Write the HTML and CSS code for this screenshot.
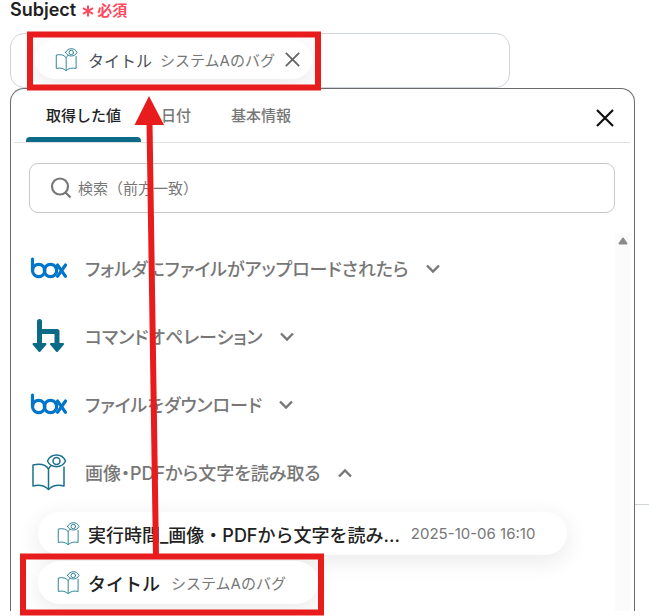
FILE: index.html
```
<!DOCTYPE html>
<html lang="ja">
<head>
<meta charset="utf-8">
<meta name="viewport" content="width=device-width, initial-scale=1">
<title>Subject</title>
<link rel="stylesheet" href="styles.css">
</head>
<body>
<svg class="defs" aria-hidden="true">
  <symbol id="book" viewBox="0 0 36 38">
    <g fill="none" stroke="currentColor" stroke-width="1.500" stroke-linejoin="round" stroke-linecap="round">
      <path d="M17.500 16 C15 12 9 10.500 2 12 V33 C8 31.500 14 33 17.500 36.500 C21 33 27 31.500 33 33 V14"/>
      <path d="M17.500 36 V16 C18 14.500 19 13.500 20.500 12.500"/>
      <path d="M16.500 8 C20 0 31 0 34.500 8 C31 15.500 20 15.500 16.500 8 Z"/>
      <circle cx="25.500" cy="8" r="3.500"/>
    </g>
  </symbol>
  <symbol id="box" viewBox="0 0 38 22">
    <g fill="none" stroke="#0075c9" stroke-width="3.200" stroke-linecap="round">
      <path d="M2.500 2 V13"/>
      <circle cx="8.700" cy="13.500" r="6.200"/>
      <circle cx="20.500" cy="13.500" r="6.200"/>
      <path d="M27.500 8 L35.500 19.300 M35.500 8 L27.500 19.300"/>
    </g>
  </symbol>
  <symbol id="chevron" viewBox="0 0 14 10">
    <path d="M1 1.500 L7 7.500 L13 1.500" fill="none" stroke="currentColor" stroke-width="2.400"/>
  </symbol>
  <symbol id="cross" viewBox="0 0 18 18">
    <path d="M1 1 L17 17 M17 1 L1 17" fill="none" stroke="currentColor" stroke-width="2.200"/>
  </symbol>
</svg>
<main class="page">
  <h1 class="label">Subject <span class="required"><svg class="star" viewBox="0 0 12 12" aria-hidden="true"><path d="M6 0.500 V11.500 M1 3.200 L11 8.800 M11 3.200 L1 8.800" fill="none" stroke="currentColor" stroke-width="2"/></svg>必須</span></h1>
  <div class="field">
    <div class="chip chip-field">
      <svg class="icon-small"><use href="#book"/></svg>
      <span class="chip-name">タイトル</span>
      <span class="chip-value">システムAのバグ</span>
      <button class="remove" type="button" aria-label="削除"><svg><use href="#cross"/></svg></button>
    </div>
  </div>
  <section class="panel">
    <header class="tabs">
      <button class="tab tab-active" type="button">取得した値</button>
      <button class="tab" type="button">日付</button>
      <button class="tab" type="button">基本情報</button>
      <button class="close" type="button" aria-label="閉じる"><svg><use href="#cross"/></svg></button>
    </header>
    <label class="search">
      <svg class="search-icon" viewBox="0 0 22 22" aria-hidden="true"><path d="M15.500 15.500 L20.500 20.500 M18 9.500 A8 8 0 1 1 2 9.500 A8 8 0 1 1 18 9.500" fill="none" stroke="currentColor" stroke-width="2.200"/></svg>
      <input class="search-input" type="text" placeholder="検索（前方一致）" aria-label="検索（前方一致）">
    </label>
    <div class="scroll">
      <div class="list">
        <button class="group" type="button"><svg class="logo-box"><use href="#box"/></svg><span>フォルダにファイルがアップロードされたら</span><svg class="chevron"><use href="#chevron"/></svg></button>
        <button class="group" type="button"><svg class="logo-tall" viewBox="0 0 36 38" aria-hidden="true"><path d="M8.500 4.500 V26 M8.500 14.500 H26 V26" fill="none" stroke="#0b6a85" stroke-width="5" stroke-linecap="round" stroke-linejoin="round"/><path d="M2.500 27 H14.500 L8.500 34 Z M20 27 H32 L26 34 Z" fill="#0b6a85" stroke="#0b6a85" stroke-width="2" stroke-linejoin="round"/></svg><span>コマンドオペレーション</span><svg class="chevron"><use href="#chevron"/></svg></button>
        <button class="group" type="button"><svg class="logo-box"><use href="#box"/></svg><span>ファイルをダウンロード</span><svg class="chevron"><use href="#chevron"/></svg></button>
        <button class="group" type="button"><svg class="logo-tall"><use href="#book"/></svg><span>画像・PDFから文字を読み取る</span><svg class="chevron chevron-up"><use href="#chevron"/></svg></button>
        <div class="values">
          <button class="chip chip-list" type="button"><svg class="icon-small"><use href="#book"/></svg><span class="chip-name">実行時間_画像・PDFから文字を読み...</span><span class="chip-value">2025-10-06 16:10</span></button>
          <button class="chip chip-list" type="button"><svg class="icon-small"><use href="#book"/></svg><span class="chip-name">タイトル</span><span class="chip-value">システムAのバグ</span></button>
        </div>
      </div>
      <div class="track"><svg viewBox="0 0 10 8" aria-hidden="true"><path d="M5 1.500 L8.500 6.500 H1.500 Z" fill="#8a8a8a" stroke="#8a8a8a" stroke-width="2" stroke-linejoin="round"/></svg></div>
    </div>
  </section>
  <div class="divider"></div>
  <svg class="annotation" width="330" height="616" viewBox="0 0 330 616" aria-hidden="true">
    <g fill="none" stroke="#e81c1c" stroke-width="6">
      <rect x="30" y="34.500" width="288" height="53"/>
      <rect x="23" y="556.500" width="298" height="56"/>
      <path d="M149.500 122 L156 556"/>
    </g>
    <path d="M149 96 L164 125 H134.500 Z" fill="#e81c1c"/>
  </svg>
</main>
</body>
</html>
```
FILE: styles.css
```
* { box-sizing: border-box; }
body {
  margin: 0;
  background: #fff;
  color: #222;
  font-family: Inter, "Noto Sans CJK JP", sans-serif;
  font-size: 15px;
}
button {
  border: 0;
  padding: 0;
  background: none;
  font: inherit;
  color: inherit;
  text-align: left;
  cursor: pointer;
}
svg { display: block; flex: none; }
.defs { position: absolute; width: 0; height: 0; }
.page {
  position: relative;
  min-height: 616px;
  padding: 0 14px 0 10px;
  overflow: hidden;
}
.label {
  display: flex;
  align-items: center;
  gap: 6px;
  height: 18px;
  margin: 0 0 15px;
  font-size: 18px;
  font-weight: 600;
}
.required {
  display: flex;
  align-items: center;
  gap: 3px;
  color: #fd4a60;
  font-size: 15px;
  font-weight: 600;
}
.star { width: 12px; height: 12px; margin-top: 4px; }
.field {
  width: 80%;
  max-width: 500px;
  height: 55px;
  padding: 6px 24px;
  border: 1px solid #ced4da;
  border-radius: 14px;
  overflow: hidden;
}
.chip {
  display: flex;
  align-items: center;
  width: fit-content;
  border-radius: 22px;
  background: #fff;
  box-shadow: 0 6px 24px rgba(0, 0, 0, 0.09);
}
.chip-field { height: 39px; padding: 0 12px 0 20px; color: #495057; }
.icon-small { width: 23px; height: 25px; color: #2a8095; }
.chip-field .chip-name { margin-left: 10px; font-size: 16px; }
.chip-value { color: #777; font-size: 15px; }
.chip-field .chip-value { margin-left: 8px; }
.remove { margin-left: 10px; color: #666; }
.remove svg { width: 15px; height: 15px; }
.panel {
  border: 1px solid #6c6c6c;
  border-bottom: 0;
  border-radius: 14px 14px 0 0;
  background: #fff;
}
.tabs {
  display: flex;
  height: 54px;
  margin: 0 4px 20px 3px;
  padding: 0 16px 0 12px;
  border-bottom: 1px solid #e0e0e0;
}
.tab {
  position: relative;
  padding: 0 20px 2px;
  color: #777;
  font-weight: 500;
}
.tab-active { color: #222; }
.tab-active::after {
  content: "";
  position: absolute;
  inset: auto 0 0;
  height: 5px;
  border-radius: 4px 4px 0 0;
  background: #0b6a85;
}
.close { margin-left: auto; padding-top: 5px; color: #111; }
.close svg { width: 18px; height: 18px; }
.search {
  display: flex;
  align-items: center;
  gap: 6px;
  height: 50px;
  margin: 0 19px 20px 18px;
  padding: 0 20px;
  border: 1px solid #c8c8c8;
  border-radius: 9px;
  color: #777;
}
.search-icon { width: 22px; height: 22px; }
.search-input {
  flex: 1;
  min-width: 0;
  padding: 0;
  border: 0;
  outline: 0;
  background: none;
  color: #222;
  font: inherit;
}
.search-input::placeholder { color: #777; opacity: 1; }
.scroll {
  display: flex;
  height: 378px;
  margin-right: 4px;
  overflow: hidden;
}
.list { flex: 1; min-width: 0; padding: 1px 0 0 19px; }
.track {
  display: flex;
  justify-content: center;
  width: 15px;
  padding-top: 4px;
  background: #fbfbfb;
}
.track svg { width: 10px; height: 8px; }
.group {
  display: grid;
  grid-template-columns: 38px auto 14px;
  align-items: center;
  gap: 17px;
  height: 68px;
  color: #777;
  font-size: 18px;
  font-weight: 500;
  font-feature-settings: "palt";
}
.logo-box { width: 38px; height: 22px; }
.logo-tall { width: 36px; height: 38px; color: #1b7189; margin-left: 1px; }
.chevron { width: 14px; height: 10px; margin-top: 2px; }
.chevron-up { transform: rotate(180deg); }
.values { display: grid; gap: 6px; padding: 6px 0 0 8px; }
.chip-list { height: 43px; padding: 0 32px 0 19px; }
.chip-list .chip-name { margin-left: 8px; font-size: 18px; font-weight: 500; }
.chip-list .chip-value { margin-left: 11px; }
.divider {
  position: absolute;
  top: 504px;
  right: 0;
  width: 14px;
  height: 1px;
  background: #ced4da;
}
.annotation { position: absolute; top: 0; left: 0; pointer-events: none; }
```
